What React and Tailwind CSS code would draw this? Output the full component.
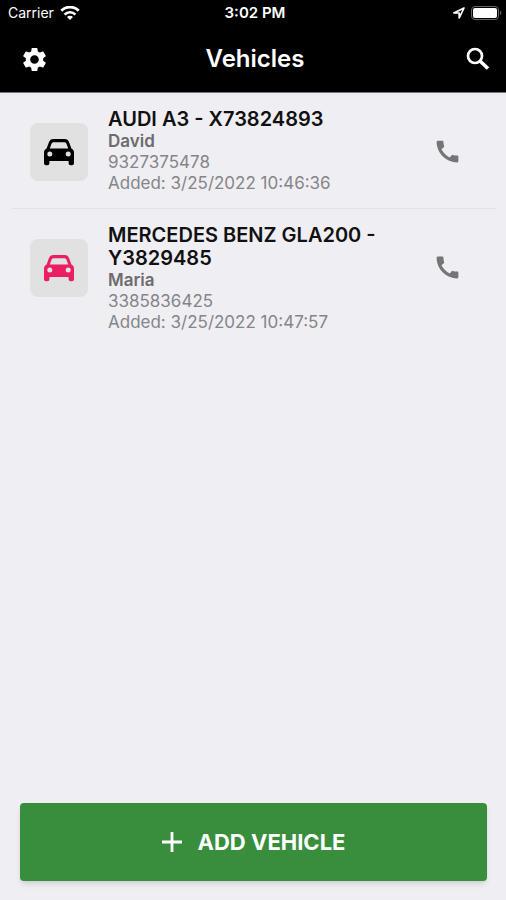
import { MdCall, MdSettings } from "react-icons/md";

const vehicles = [
  {
    id: 1,
    title: "AUDI A3 - X73824893",
    owner: "David",
    phone: "9327375478",
    added: "3/25/2022 10:46:36",
    iconClass: "text-black",
  },
  {
    id: 2,
    title: "MERCEDES BENZ GLA200 - Y3829485",
    owner: "Maria",
    phone: "3385836425",
    added: "3/25/2022 10:47:57",
    iconClass: "text-[#e91e63]",
  },
];

function CarIcon() {
  return (
    <svg width="30" height="27" viewBox="0 0 30 27" fill="currentColor" aria-hidden="true">
      {/* body with windscreen and headlights cut out */}
      <path
        fillRule="evenodd"
        d="M9.6 0h10.8c2.600 0 4 1.200 4.800 3.400L27.400 9.400C29.200 10.200 30 11.600 30 13.400V24.200a2 2 0 0 1-2 2h-1.400a2 2 0 0 1-2-2V22H5.400v2.200a2 2 0 0 1-2 2H2a2 2 0 0 1-2-2V13.400C0 11.600.8 10.200 2.600 9.400L4.800 3.400C5.600 1.200 7 0 9.600 0zM10 3.200C8.500 3.200 7.800 3.800 7.400 5L5.800 9.600h18.400L22.600 5C22.200 3.800 21.500 3.200 20 3.200zM5.800 12.400a2.500 2.500 0 1 0 0 5 2.500 2.500 0 0 0 0-5zM24.200 12.400a2.500 2.500 0 1 0 0 5 2.500 2.500 0 0 0 0-5z"
      />
    </svg>
  );
}

function SearchIcon() {
  return (
    <svg width="24" height="24" viewBox="0 0 24 24" fill="none" stroke="currentColor" aria-hidden="true">
      <circle cx="9" cy="9" r="7" strokeWidth="2.7" />
      <path d="M14 14 22 21.5" strokeWidth="3.6" />
    </svg>
  );
}

function PlusIcon() {
  return (
    <svg width="20" height="20" viewBox="0 0 20 20" fill="none" stroke="currentColor" strokeWidth="2.8" aria-hidden="true">
      <path d="M10 0v20M0 10h20" />
    </svg>
  );
}

function StatusBar() {
  return (
    <div className="grid grid-cols-3 items-center pl-2 pr-1 h-[26px] text-[14px] leading-4">
      <div className="flex items-center gap-1.5">
        <span>Carrier</span>
        <svg width="20" height="14" viewBox="0 0 20 14" fill="none" stroke="currentColor" aria-hidden="true">
          <path d="M1.3 4.8A12 12 0 0 1 18.7 4.8" strokeWidth="2.9" />
          <path d="M4.6 8.6A7.3 7.3 0 0 1 15.4 8.6" strokeWidth="2.6" />
          <path d="M10 14 7 11A4.2 4.2 0 0 1 13 11Z" fill="currentColor" stroke="none" />
        </svg>
      </div>
      <span className="text-center text-[15px] font-semibold">3:02 PM</span>
      <div className="flex items-center justify-end gap-1">
        <svg width="14" height="14" viewBox="0 0 14 14" fill="none" stroke="currentColor" strokeWidth="1.7" strokeLinejoin="round" aria-hidden="true">
          <path d="M12 2 1.800 7H7.200V12Z" />
        </svg>
        <svg width="32" height="14" viewBox="0 0 32 14" aria-hidden="true">
          <rect x="1.5" y="0.5" width="27" height="13" rx="3.5" fill="none" stroke="#666" />
          <rect x="3" y="2" width="24" height="10" rx="2" fill="#fff" />
          <path d="M30 4.8a2.4 2.4 0 0 1 0 4.4z" fill="#666" />
        </svg>
      </div>
    </div>
  );
}

function VehicleRow({ vehicle }) {
  const { title, owner, phone, added, iconClass } = vehicle;
  return (
    <li className="ml-3 mr-2.5 border-b border-[#e2e2e6] last:border-b-0 pl-[18px] pr-[34px] pt-[15px] pb-[14px] flex items-start">
      <div className={`mt-[15px] size-[58px] shrink-0 rounded-lg bg-[#e1e1e1] flex items-center justify-center ${iconClass}`}>
        <CarIcon />
      </div>
      <div className="ml-5 flex-1 min-w-0 text-[17px] leading-[21px] text-[#858588]">
        <h2 className="text-[20px] leading-[23px] font-semibold text-[#111]">{title}</h2>
        <p className="font-semibold text-[#6c6c6f]">{owner}</p>
        <p>{phone}</p>
        <p>Added: {added}</p>
      </div>
      <button type="button" aria-label={`Call ${owner}`} className="mt-[29px] ml-2 text-[#757577]">
        <MdCall size={29} />
      </button>
    </li>
  );
}

export default function App() {
  return (
    <div className="min-h-screen flex flex-col bg-[#efeef3] font-['Inter',sans-serif]">
      <header className="bg-black text-white border-b border-[#77777a]">
        <StatusBar />
        <div className="grid grid-cols-3 items-center h-[66px] pl-5 pr-4">
          <button type="button" aria-label="Settings" className="justify-self-start">
            <MdSettings size={29} />
          </button>
          <h1 className="text-center text-[24px] leading-8 font-semibold">Vehicles</h1>
          <button type="button" aria-label="Search" className="justify-self-end">
            <SearchIcon />
          </button>
        </div>
      </header>

      <main className="flex-1">
        <ul>
          {vehicles.map((vehicle) => (
            <VehicleRow key={vehicle.id} vehicle={vehicle} />
          ))}
        </ul>
      </main>

      <div className="pl-5 pr-[19px] pb-[19px]">
        <button
          type="button"
          className="w-full h-[78px] rounded-[4px] bg-[#388e3c] text-white shadow-md flex items-center justify-center gap-4 text-[22px] font-bold"
        >
          <PlusIcon />
          ADD VEHICLE
        </button>
      </div>
    </div>
  );
}
